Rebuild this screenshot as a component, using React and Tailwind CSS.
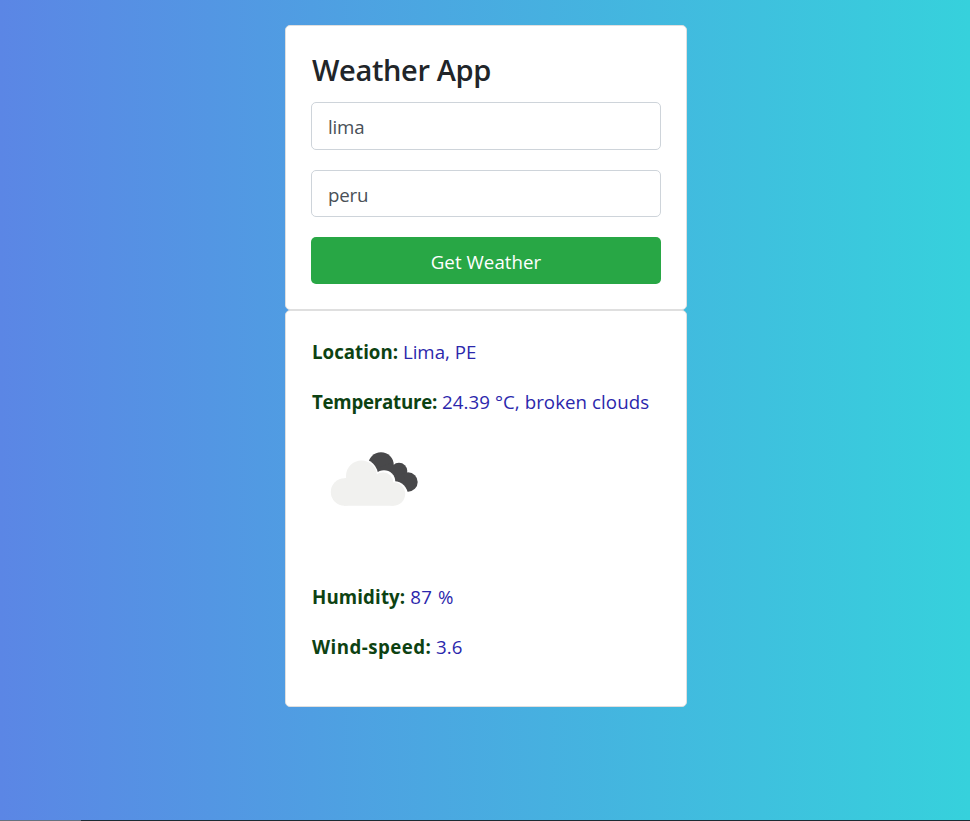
const Row = ({ label, value, labelClass = "", valueClass = "" }) => (
  <p className="mb-5 h-[30px] whitespace-nowrap pl-px leading-[30px] text-[#2b27ac]">
    <span className={`font-bold text-[#0d4212] ${labelClass}`}>{label}</span>{" "}
    <span className={valueClass}>{value}</span>
  </p>
);

const BrokenClouds = () => (
  <svg className="block h-[125px] w-[125px]" viewBox="0 0 125 125" aria-label="broken clouds">
    <g fill="#48484a">
      <circle cx="70" cy="48" r="12.8" />
      <circle cx="88" cy="54" r="8.3" />
      <circle cx="97" cy="65" r="9.7" />
      <path d="M64 52L80 46L93 60L97 74L78 70Z" />
    </g>
    <g fill="#fff">
      <circle cx="50" cy="59" r="17.3" />
      <circle cx="73" cy="64.5" r="11.3" />
      <circle cx="83.5" cy="77.5" r="13.2" />
    </g>
    <g fill="#f1f1ef">
      <circle cx="33.5" cy="75" r="13.7" />
      <circle cx="50.5" cy="59" r="15.5" />
      <circle cx="72" cy="65.5" r="10.2" />
      <circle cx="82.5" cy="77" r="11.7" />
      <path d="M33 62L50 52L73 60L83 88.7H33Z" />
    </g>
  </svg>
);

const field =
  "block w-full rounded-[5px] border border-[#ced4da] bg-white px-4 text-[18.7px] tracking-[-0.2px] text-[#495057] outline-none";

export default function App() {
  return (
    <div className="flex h-[821px] flex-col bg-[linear-gradient(to_right,#5b86e5,#36d1dc)] font-['Open_Sans','Noto_Sans',sans-serif] text-[18.7px]">
      <main className="mx-auto w-[402px] flex-1 translate-x-px pt-[25px]">
        <section className="h-[285px] rounded-[5px] border border-[#dfdfdf] bg-white p-[25px]">
          <h1 className="mb-2.5 h-[41px] whitespace-nowrap pl-px text-[29px] font-semibold leading-[38px] tracking-[-0.35px] text-[#212529]">
            Weather App
          </h1>
          <input className={`${field} mb-5 h-12`} defaultValue="lima" />
          <input className={`${field} mb-5 h-[47px] pt-0.5`} defaultValue="peru" />
          <button className="block h-[47px] w-full rounded-[5px] bg-[#28a745] pt-[3px] tracking-[0.05px] text-white">
            Get Weather
          </button>
        </section>
        <section className="h-[397px] rounded-[5px] border border-[#dfdfdf] bg-white px-[25px] pt-[26px]">
          <Row label="Location:" value="Lima, PE" />
          <Row
            label="Temperature:"
            value="24.39 °C, broken clouds"
            labelClass="tracking-[-0.25px]"
            valueClass="tracking-[0.07px]"
          />
          <div className="-mt-5 mb-10">
            <BrokenClouds />
          </div>
          <Row
            label="Humidity:"
            value="87 %"
            labelClass="tracking-[0.12px]"
            valueClass="tracking-[0.5px]"
          />
          <Row label="Wind-speed:" value="3.6" labelClass="tracking-[0.45px]" />
        </section>
      </main>
      <footer className="flex h-px bg-[#1c2b33]">
        <div className="w-[81px] bg-[#65717f]" />
      </footer>
    </div>
  );
}
